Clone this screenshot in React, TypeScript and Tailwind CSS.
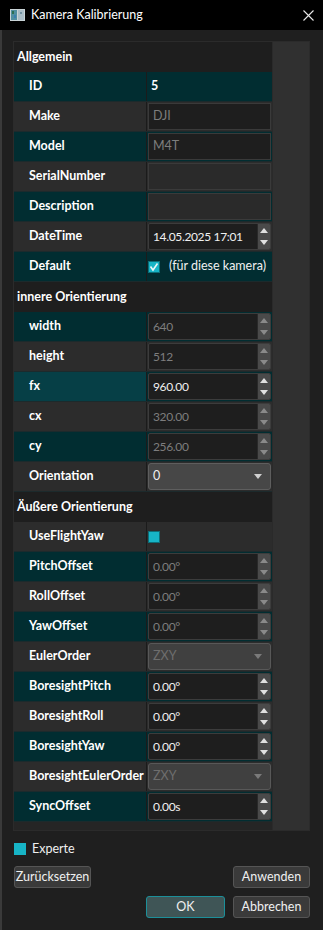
import React from 'react';

type Kind = 'plain' | 'text' | 'spin' | 'combo' | 'check' | 'checkLabel';

interface Row {
  label: string;
  kind?: Kind;
  value?: string;
  disabled?: boolean;
  header?: boolean;
  selected?: boolean;
}

const rows: Row[] = [
  { label: 'Allgemein', header: true },
  { label: 'ID', kind: 'plain', value: '5' },
  { label: 'Make', kind: 'text', value: 'DJI', disabled: true },
  { label: 'Model', kind: 'text', value: 'M4T', disabled: true },
  { label: 'SerialNumber', kind: 'text', value: '' },
  { label: 'Description', kind: 'text', value: '' },
  { label: 'DateTime', kind: 'spin', value: '14.05.2025 17:01' },
  { label: 'Default', kind: 'checkLabel', value: '(für diese kamera)' },
  { label: 'innere Orientierung', header: true },
  { label: 'width', kind: 'spin', value: '640', disabled: true },
  { label: 'height', kind: 'spin', value: '512', disabled: true },
  { label: 'fx', kind: 'spin', value: '960.00', selected: true },
  { label: 'cx', kind: 'spin', value: '320.00', disabled: true },
  { label: 'cy', kind: 'spin', value: '256.00', disabled: true },
  { label: 'Orientation', kind: 'combo', value: '0' },
  { label: 'Äußere Orientierung', header: true },
  { label: 'UseFlightYaw', kind: 'check' },
  { label: 'PitchOffset', kind: 'spin', value: '0.00°', disabled: true },
  { label: 'RollOffset', kind: 'spin', value: '0.00°', disabled: true },
  { label: 'YawOffset', kind: 'spin', value: '0.00°', disabled: true },
  { label: 'EulerOrder', kind: 'combo', value: 'ZXY', disabled: true },
  { label: 'BoresightPitch', kind: 'spin', value: '0.00°' },
  { label: 'BoresightRoll', kind: 'spin', value: '0.00°' },
  { label: 'BoresightYaw', kind: 'spin', value: '0.00°' },
  { label: 'BoresightEulerOrder', kind: 'combo', value: 'ZXY', disabled: true },
  { label: 'SyncOffset', kind: 'spin', value: '0.00s' },
];

function Check({ checked }: { checked?: boolean }) {
  return (
    <div className="w-[12px] h-[12px] bg-[#17b4c6] border border-[#0d6e78] flex items-center justify-center">
      {checked && (
        <svg width="10" height="10" viewBox="0 0 10 10">
          <path d="M1.5 4.5 L4 8 L8.5 1.5" stroke="#eaf6f8" strokeWidth="1.6" fill="none" />
        </svg>
      )}
    </div>
  );
}

function SpinButtons({ disabled }: { disabled?: boolean }) {
  const c = disabled ? '#8a8a8a' : '#e0e0e0';
  return (
    <div className="w-[13px] h-full flex flex-col bg-[#4a4a4a] border-l border-[#2a2a2a]">
      <div className="flex-1 flex items-center justify-center">
        <svg width="8" height="5" viewBox="0 0 8 5"><path d="M0 5 L4 0 L8 5 Z" fill={c} /></svg>
      </div>
      <div className="flex-1 flex items-center justify-center">
        <svg width="8" height="5" viewBox="0 0 8 5"><path d="M0 0 L4 5 L8 0 Z" fill={c} /></svg>
      </div>
    </div>
  );
}

function Value({ row }: { row: Row }) {
  const textColor = row.disabled ? 'text-[#7d7d7d]' : 'text-[#f0f0f0]';
  switch (row.kind) {
    case 'plain':
      return <div className="pl-[4px] font-bold text-white">{row.value}</div>;
    case 'text':
      return (
        <div className={`h-[27px] mt-[1px] mx-[1px] px-[4px] flex items-center border border-[#3a3a3a] ${row.value ? 'bg-[#1e1e1e]' : 'bg-[#2a2a2a]'} ${textColor}`}>
          {row.value}
        </div>
      );
    case 'spin':
      return (
        <div className="h-[27px] mt-[1px] mx-[1px] flex items-stretch border border-[#3c3c3c] bg-[#1e1e1e] rounded-[2px] overflow-hidden">
          <div className={`flex-1 flex items-center px-[4px] text-[12px] tracking-[-0.35px] ${textColor}`}>{row.value}</div>
          <SpinButtons disabled={row.disabled} />
        </div>
      );
    case 'combo':
      return (
        <div className={`h-[27px] mt-[1px] mx-[1px] flex items-center justify-between px-[4px] border rounded-[3px] ${row.disabled ? 'bg-[#404040] border-[#585858] text-[#6e6e6e]' : 'bg-[#474747] border-[#5e5e5e] text-[#f0f0f0]'}`}>
          <span>{row.value}</span>
          <svg width="8" height="5" viewBox="0 0 8 5" className="mr-[4px]">
            <path d="M0 0 L4 5 L8 0 Z" fill={row.disabled ? '#7a7a7a' : '#d0d0d0'} />
          </svg>
        </div>
      );
    case 'check':
      return <div className="pl-[1px]"><Check /></div>;
    case 'checkLabel':
      return (
        <div className="pl-[1px] flex items-center gap-[9px] text-[#f0f0f0]">
          <Check checked />
          <span>{row.value}</span>
        </div>
      );
    default:
      return null;
  }
}

export default function App() {
  return (
    <div
      className="w-[323px] h-[930px] bg-[#1f1f1f] text-[12.5px] text-white flex flex-col overflow-hidden"
      style={{ fontFamily: 'Lato, "Noto Sans", sans-serif' }}
    >
      {/* Titelleiste */}
      <div className="h-[30px] bg-black flex items-center pl-[10px] pr-[9px] shrink-0">
        <svg width="15" height="12" viewBox="0 0 15 12" className="mr-[6px]">
          <rect x="0" y="0" width="15" height="12" fill="#c9d3d6" />
          <rect x="1" y="1" width="6" height="10" fill="#4f8fa0" />
          <rect x="2" y="2" width="2" height="3" fill="#2c6f52" />
          <rect x="4" y="6" width="2" height="3" fill="#3a7fb0" />
          <rect x="8" y="1" width="6" height="10" fill="#a9bdc6" />
          <rect x="10" y="3" width="2" height="2" fill="#6f8f9f" />
        </svg>
        <span className="text-[12.5px] text-white">Kamera Kalibrierung</span>
        <div className="flex-1" />
        <svg width="11" height="11" viewBox="0 0 11 11">
          <path d="M0.5 0.5 L10.5 10.5 M10.5 0.5 L0.5 10.5" stroke="#e8e8e8" strokeWidth="1.1" />
        </svg>
      </div>

      <div className="flex-1 border-l-2 border-[#3a3a3a] pl-[11px] pr-[13px] pt-[11px]">
        {/* Eigenschaftstabelle */}
        <div className="h-[790px] border border-[#2b2b2b] flex bg-[#252525]">
          <div className="w-[258px] flex flex-col">
            {rows.map((row, i) => {
              if (row.header) {
                return (
                  <div key={row.label} className="h-[30px] flex items-center pl-[3px] bg-[#1e1e1e] font-bold text-white">
                    {row.label}
                  </div>
                );
              }
              const teal = i % 2 === 1;
              const bg = teal ? 'bg-[#012d31]' : 'bg-[#2c2c2c]';
              return (
                <div key={row.label} className={`h-[30px] flex border-b border-[#1c2a2c] ${bg}`}>
                  <div
                    className={`w-[133px] flex items-center pl-[15px] font-bold text-white border-r border-[#1b1b1b] whitespace-nowrap ${row.selected ? 'bg-[#063f46]' : ''}`}
                  >
                    {row.label}
                  </div>
                  <div className="flex-1 flex flex-col justify-start">
                    {row.kind === 'plain' || row.kind === 'check' || row.kind === 'checkLabel' ? (
                      <div className="h-full flex items-center">
                        <Value row={row} />
                      </div>
                    ) : (
                      <Value row={row} />
                    )}
                  </div>
                </div>
              );
            })}
          </div>
          <div className="flex-1 bg-[#303030] border-l border-[#2a2a2a]" />
        </div>

        {/* Experte */}
        <div className="mt-[12px] h-[12px] flex items-center gap-[6px] pl-[1px]">
          <div className="w-[12px] h-[12px] bg-[#17b4c6]" />
          <span className="text-[#f0f0f0]">Experte</span>
        </div>

        {/* Buttons */}
        <div className="mt-[11px] flex justify-between pl-[1px]">
          <button className="h-[22px] w-[77px] bg-[#3a3a3a] border border-[#555] rounded-[3px] text-[#f0f0f0] text-[12.5px]">
            Zurücksetzen
          </button>
          <button className="h-[22px] w-[77px] bg-[#3a3a3a] border border-[#555] rounded-[3px] text-[#f0f0f0] text-[12.5px]">
            Anwenden
          </button>
        </div>
        <div className="mt-[8px] flex justify-end gap-[8px]">
          <button className="h-[22px] w-[79px] bg-[#3f5556] border border-[#1c8f99] rounded-[3px] text-[#f0f0f0] text-[12.5px]">
            OK
          </button>
          <button className="h-[22px] w-[77px] bg-[#3a3a3a] border border-[#555] rounded-[3px] text-[#f0f0f0] text-[12.5px]">
            Abbrechen
          </button>
        </div>
      </div>
    </div>
  );
}
